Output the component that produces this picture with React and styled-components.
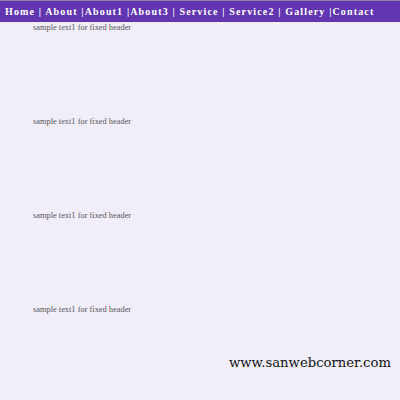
import React from 'react';
import styled, { createGlobalStyle } from 'styled-components';

const Global = createGlobalStyle`
  html, body { margin: 0; padding: 0; background: #f2eef9; }
  body { font-family: "Liberation Serif", "Times New Roman", serif; }
`;

const Page = styled.div`
  width: 400px;
  height: 400px;
  background: #f2eef9;
  position: relative;
  overflow: hidden;
`;

const Header = styled.div`
  height: 21px;
  background: #6236b1;
  border-top: 1px solid #8f86a6;
  display: flex;
  align-items: center;
  padding-left: 5px;
  white-space: pre;
`;

const NavText = styled.span`
  color: #fff;
  font-family: "Liberation Serif", serif;
  font-weight: 700;
  font-size: 10px;
  letter-spacing: 1.15px;
`;

const Content = styled.div`
  padding-left: 33px;
  display: flex;
  flex-direction: column;
  gap: 83px;
`;

const Line = styled.p`
  margin: 0;
  font-family: "Liberation Serif", serif;
  font-size: 8.4px;
  color: #555;
  line-height: 11px;
`;

const Mark = styled.div`
  position: absolute;
  left: 229px;
  top: 355px;
  font-family: "DejaVu Serif", serif;
  font-size: 13.2px;
  color: #111;
`;

const links = ['Home ', ' About ', 'About1 ', 'About3 ', ' Service ', ' Service2 ', ' Gallery ', 'Contact'];

export default function App() {
  return (
    <Page>
      <Global />
      <Header>
        <NavText>{links.join('|')}</NavText>
      </Header>
      <Content>
        {[0, 1, 2, 3].map(i => <Line key={i}>sample text1 for fixed header</Line>)}
      </Content>
      <Mark>www.sanwebcorner.com</Mark>
    </Page>
  );
}
